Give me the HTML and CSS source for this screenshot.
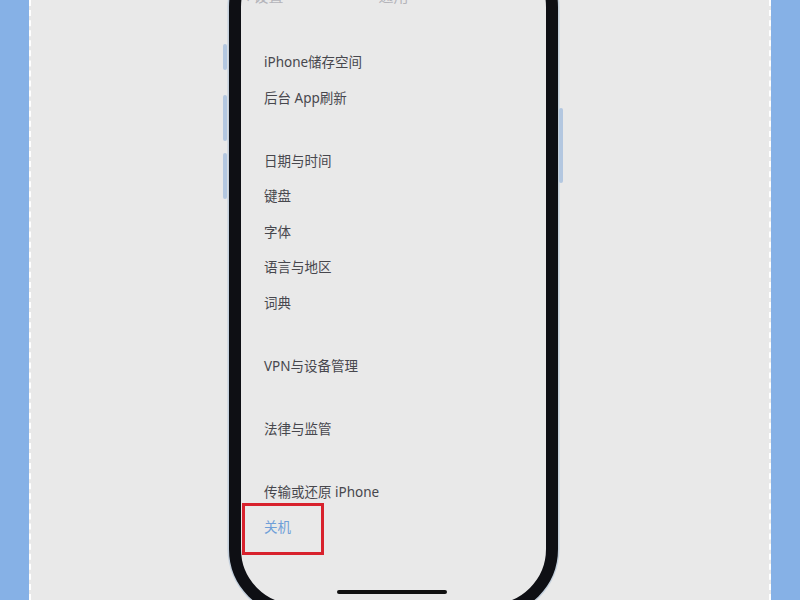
FILE: index.html
```html
<!DOCTYPE html>
<html lang="zh-CN">

<head>
  <meta charset="utf-8">
  <link rel="stylesheet" href="styles.css">
</head>

<body>
  <div class="frame">
    <div class="phone">
      <span class="btn btn-silent"></span>
      <span class="btn btn-vol-up"></span>
      <span class="btn btn-vol-down"></span>
      <span class="btn btn-power"></span>

      <div class="screen">
        <div class="nav">
          <span class="nav-back">&lsaquo; 设置</span>
          <span class="nav-title">通用</span>
        </div>

        <ul class="group">
          <li>iPhone储存空间</li>
          <li>后台 App刷新</li>
        </ul>
        <ul class="group">
          <li>日期与时间</li>
          <li>键盘</li>
          <li>字体</li>
          <li>语言与地区</li>
          <li>词典</li>
        </ul>
        <ul class="group">
          <li>VPN与设备管理</li>
        </ul>
        <ul class="group">
          <li>法律与监管</li>
        </ul>
        <ul class="group">
          <li>传输或还原 iPhone</li>
          <li class="link">关机</li>
        </ul>

        <!-- red marker around the shutdown item -->
        <div class="mark"></div>
        <div class="home-bar"></div>
      </div>
    </div>
  </div>
</body>

</html>
```

FILE: styles.css
```css
body {
  margin: 0;
  width: 800px;
  height: 600px;
  overflow: hidden;
  background-color: #86b1e6;
  font-family: 'Noto Sans', 'Noto Sans CJK SC', sans-serif;
}

.frame {
  height: 600px;
  margin: 0 29px 0 29px;
  border-left: 2px dashed #ffffff;
  border-right: 2px dashed #ffffff;
  background-color: #e9e9e9;
  overflow: hidden;
}

/* phone body, cut off at top and bottom */
.phone {
  position: relative;
  width: 329px;
  height: 676px;
  margin: -60px 0 0 198px;
  box-sizing: border-box;
  border: 12px solid #0e0f14;
  border-radius: 67px;
  box-shadow: 0 0 0 1.5px #c3cfdc;
  background-color: #e9e9e9;
}

.btn {
  position: absolute;
  width: 4px;
  background-color: #b3c7e0;
  border-radius: 2px;
}

.btn-silent {
  left: -18px;
  top: 92px;
  height: 26px;
}

.btn-vol-up {
  left: -18px;
  top: 143px;
  height: 46px;
}

.btn-vol-down {
  left: -18px;
  top: 201px;
  height: 46px;
}

.btn-power {
  right: -17px;
  top: 156px;
  height: 75px;
}

.screen {
  position: relative;
  height: 100%;
  border-radius: 55px;
  overflow: hidden;
}

.nav {
  position: relative;
  height: 20px;
  margin-top: 34px;
  line-height: 20px;
  font-size: 15px;
  color: #b4b4ba;
}

.nav-back {
  position: absolute;
  left: 4px;
}

.nav-title {
  display: block;
  text-align: center;
}

.group {
  list-style: none;
  margin: 27.5px 0 0 0;
  padding: 0 0 0 23px;
}

.nav + .group {
  margin-top: 39px;
}

.group li {
  height: 35.5px;
  line-height: 35.5px;
  font-size: 13.5px;
  color: #47474d;
}

.group li.link {
  color: #6f9fd8;
}

.mark {
  position: absolute;
  left: 1px;
  top: 551px;
  width: 82px;
  height: 52px;
  box-sizing: border-box;
  border: 3px solid #d8222d;
}

.home-bar {
  position: absolute;
  left: 96px;
  bottom: 10px;
  width: 110px;
  height: 4px;
  border-radius: 2px;
  background-color: #111111;
}
```
